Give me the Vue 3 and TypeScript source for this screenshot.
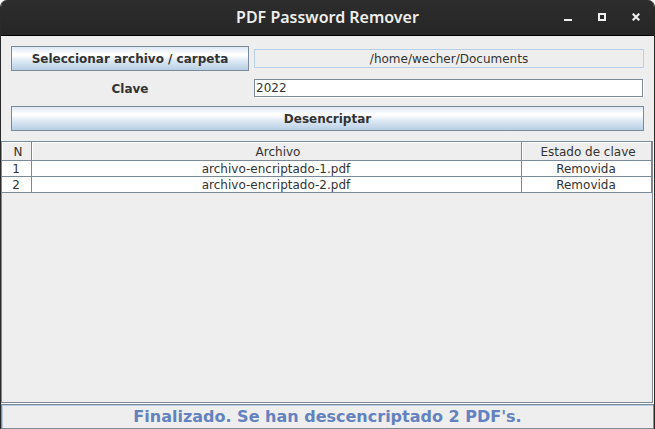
<script setup lang="ts">
import { ref } from 'vue'

interface FileRow {
  id: number
  name: string
  status: string
}

const path = ref('/home/wecher/Documents')
const password = ref('2022')
const rows = ref<FileRow[]>([
  { id: 1, name: 'archivo-encriptado-1.pdf', status: 'Removida' },
  { id: 2, name: 'archivo-encriptado-2.pdf', status: 'Removida' },
])
</script>

<template>
  <div class="window">
    <header class="titlebar">
      <h1 class="title">PDF Password Remover</h1>
      <div class="controls">
        <button class="control" type="button" aria-label="Minimizar">
          <svg viewBox="0 0 8 8" width="8" height="8"><path d="M0 6h8v2H0z" fill="#eeeeec" /></svg>
        </button>
        <button class="control" type="button" aria-label="Maximizar">
          <svg viewBox="0 0 8 8" width="8" height="8"><path d="M1 1h6v6H1z" fill="none" stroke="#eeeeec" stroke-width="2" /></svg>
        </button>
        <button class="control" type="button" aria-label="Cerrar">
          <svg viewBox="0 0 8 8" width="8" height="8"><path d="M0.7 0.7L7.3 7.3M7.3 0.7L0.7 7.3" fill="none" stroke="#eeeeec" stroke-width="2.2" /></svg>
        </button>
      </div>
    </header>

    <main class="content">
      <form class="form" @submit.prevent>
        <button class="button" type="button">Seleccionar archivo / carpeta</button>
        <input v-model="path" class="path" type="text" readonly aria-label="Ruta" />
        <label class="label" for="clave">Clave</label>
        <input id="clave" v-model="password" class="field" type="text" />
        <button class="button wide" type="submit">Desencriptar</button>
      </form>

      <div class="scroll">
        <table class="files">
          <colgroup>
            <col class="col-n" />
            <col />
            <col class="col-status" />
          </colgroup>
          <thead>
            <tr>
              <th scope="col">N</th>
              <th scope="col">Archivo</th>
              <th scope="col">Estado de clave</th>
            </tr>
          </thead>
          <tbody>
            <tr v-for="row in rows" :key="row.id">
              <td>{{ row.id }}</td>
              <td>{{ row.name }}</td>
              <td>{{ row.status }}</td>
            </tr>
          </tbody>
        </table>
      </div>

      <p class="status" role="status">Finalizado. Se han descencriptado 2 PDF's.</p>
    </main>
  </div>
</template>

<style>
body {
  margin: 0;
  background: #ffffff;
}
</style>

<style scoped>
.window {
  box-sizing: border-box;
  display: flex;
  flex-direction: column;
  min-height: 100vh;
  border: solid #2a2a2a;
  border-width: 0 1px;
  border-radius: 7px 7px 0 0;
  overflow: hidden;
  background: #eeeeee;
  color: #333333;
  font: 12px/16px 'DejaVu Sans', sans-serif;
}

.titlebar {
  box-sizing: border-box;
  display: grid;
  grid-template-columns: 1fr auto 1fr;
  align-items: center;
  height: 36px;
  padding-bottom: 1px;
  border-bottom: 1px solid #000000;
  background: linear-gradient(#2d2d2d, #262626);
}

.title {
  grid-column: 2;
  margin: 0;
  color: #eeeeec;
  font: 600 16px/24px 'Noto Sans', sans-serif;
}

.controls {
  display: flex;
  justify-content: flex-end;
  gap: 10px;
  padding-right: 6px;
}

.control {
  display: grid;
  place-items: center;
  width: 24px;
  height: 24px;
  padding: 0;
  border: 0;
  background: none;
}

.content {
  display: flex;
  flex: 1;
  flex-direction: column;
}

.form {
  display: grid;
  grid-template-columns: 238fr 390fr;
  grid-template-rows: 25px 25px 25px;
  gap: 5px;
  align-items: center;
  padding: 10px;
}

.button {
  height: 25px;
  padding: 0;
  border: 1px solid #7a8a99;
  background: linear-gradient(#dde8f3 0%, #ffffff 30%, #ffffff 36%, #dde8f3 60%, #b8cfe5 100%);
  color: #333333;
  font: bold 12px/16px 'DejaVu Sans', sans-serif;
}

.wide {
  grid-column: 1 / -1;
}

.path,
.field {
  box-sizing: border-box;
  width: 100%;
  min-width: 0;
  height: 19px;
  padding: 0 1px;
  border: 1px solid #b8cfe5;
  border-radius: 0;
  outline: 0;
  background: #eeeeee;
  color: #333333;
  font: 12px/16px 'DejaVu Sans', sans-serif;
}

.path {
  text-align: center;
}

/* Etched border: the white highlight takes the last pixel on the right and bottom. */
.field {
  width: calc(100% - 1px);
  height: 18px;
  margin: 0 1px 1px 0;
  border-color: #7a8a99;
  background: #ffffff;
  box-shadow: 1px 1px #ffffff;
}

.label {
  font-weight: bold;
  text-align: center;
}

.scroll {
  flex: 1;
  margin-right: 1px;
  border: 1px solid #7a8a99;
  box-shadow: 1px 1px #ffffff;
}

.files {
  width: 100%;
  border-spacing: 0;
  table-layout: fixed;
}

.col-n {
  width: 30px;
}

.col-status {
  width: 130px;
}

.files th,
.files td {
  height: 13px;
  padding: 2px 1px 0 0;
  border: solid #7a8a99;
  border-width: 0 1px 1px 0;
  background: #ffffff;
  font-weight: normal;
  line-height: 13px;
  text-align: center;
}

.files th {
  height: 16px;
  padding: 2px 0 0 3px;
  background: #eeeeee;
  box-shadow: inset 1px 1px #ffffff;
}

.status {
  margin: 1px 0 0;
  border: 1px solid #7a8a99;
  box-shadow: inset 1px 1px #b8cfe5;
  color: #6382bf;
  font-size: 16px;
  font-weight: bold;
  line-height: 23px;
  text-align: center;
}
</style>
